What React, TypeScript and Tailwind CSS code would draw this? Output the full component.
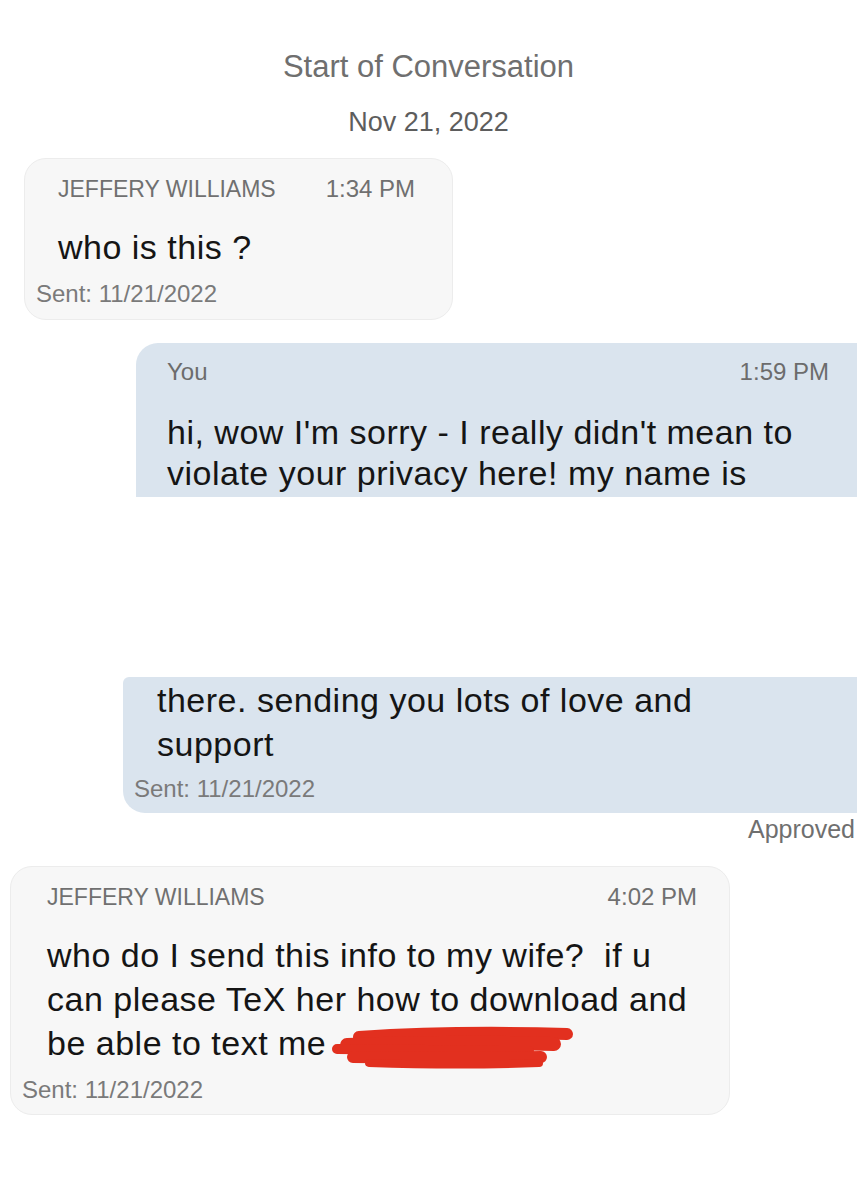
import React from "react";

const font = { fontFamily: '"Liberation Sans", Arial, sans-serif' };

function Scribble() {
  return (
    <svg
      className="absolute left-[318px] top-[158px]"
      width="250"
      height="48"
      viewBox="0 0 250 48"
    >
      <g fill="none" stroke="#e2301f" strokeLinecap="round" strokeLinejoin="round">
        <path d="M30 12 C 90 8, 170 7, 238 9" strokeWidth="12" />
        <path d="M18 20 C 80 18, 160 17, 225 19" strokeWidth="14" />
        <path d="M8 24 C 60 24, 140 26, 200 26" strokeWidth="10" />
        <path d="M24 32 C 90 33, 150 33, 212 32" strokeWidth="12" />
        <path d="M40 38 C 100 40, 160 40, 210 38" strokeWidth="8" />
      </g>
    </svg>
  );
}

export default function App() {
  return (
    <div className="w-[857px] h-[1200px] bg-white overflow-hidden flex flex-col" style={font}>
      {/* Header */}
      <div className="mt-[51px] text-center text-[31px] leading-[32px] text-[#6f6f6f]">
        Start of Conversation
      </div>
      <div className="mt-[24px] text-center text-[27px] leading-[30px] font-medium text-[#5d5d5d]">
        Nov 21, 2022
      </div>

      {/* Incoming 1 */}
      <div className="mt-[21px] ml-[24px] w-[429px] rounded-[22px] border border-[#ececec] bg-[#f7f7f7] pt-[18px] pb-[12px]">
        <div className="flex items-center gap-[50px] pl-[33px] text-[23px] leading-[24px] text-[#707070]">
          <span>JEFFERY WILLIAMS</span>
          <span className="text-[24px]">1:34 PM</span>
        </div>
        <div className="mt-[26px] pl-[33px] text-[34px] leading-[40px] tracking-[0.5px] text-[#151515]">who is this ?</div>
        <div className="mt-[14px] pl-[11px] text-[24px] leading-[26px] text-[#7a7a7a]">Sent: 11/21/2022</div>
      </div>

      {/* Outgoing, top half */}
      <div className="mt-[23px] ml-[136px] flex-none rounded-tl-[22px] bg-[#dae4ee] pt-[17px] pb-[3px] pl-[31px] pr-[28px]">
        <div className="flex items-center justify-between text-[24px] leading-[24px] text-[#6c6c6c]">
          <span>You</span>
          <span>1:59 PM</span>
        </div>
        <div className="mt-[28px] text-[34px] leading-[41px] tracking-[0.5px] text-[#151515]">
          hi, wow I'm sorry - I really didn't mean to
          <br />
          violate your privacy here! my name is
        </div>
      </div>

      <div className="h-[180px] flex-none" />

      {/* Outgoing, bottom half */}
      <div className="ml-[123px] flex-none rounded-tl-[6px] rounded-bl-[22px] bg-[#dae4ee] pt-[1px] pb-[11px]">
        <div className="pl-[34px] text-[34px] leading-[44px] tracking-[0.5px] text-[#151515]">
          there. sending you lots of love and
          <br />
          support
        </div>
        <div className="mt-[10px] pl-[11px] text-[24px] leading-[26px] text-[#7a7a7a]">Sent: 11/21/2022</div>
      </div>
      <div className="mt-[4px] pr-[2px] text-right text-[25px] leading-[24px] text-[#6f6f6f]">Approved</div>

      {/* Incoming 2 */}
      <div className="relative mt-[25px] ml-[10px] w-[720px] rounded-[22px] border border-[#ececec] bg-[#f7f7f7] pt-[18px] pb-[11px]">
        <div className="flex items-center justify-between pl-[36px] pr-[32px] text-[23px] leading-[24px] text-[#707070]">
          <span>JEFFERY WILLIAMS</span>
          <span className="text-[24px]">4:02 PM</span>
        </div>
        <div className="mt-[24px] pl-[36px] text-[34px] leading-[44px] tracking-[0.5px] text-[#151515]">
          who do I send this info to my wife?&nbsp; if u
          <br />
          can please TeX her how to download and
          <br />
          be able to text me
        </div>
        <div className="mt-[12px] pl-[11px] text-[24px] leading-[26px] text-[#7a7a7a]">Sent: 11/21/2022</div>
        <Scribble />
      </div>
    </div>
  );
}
